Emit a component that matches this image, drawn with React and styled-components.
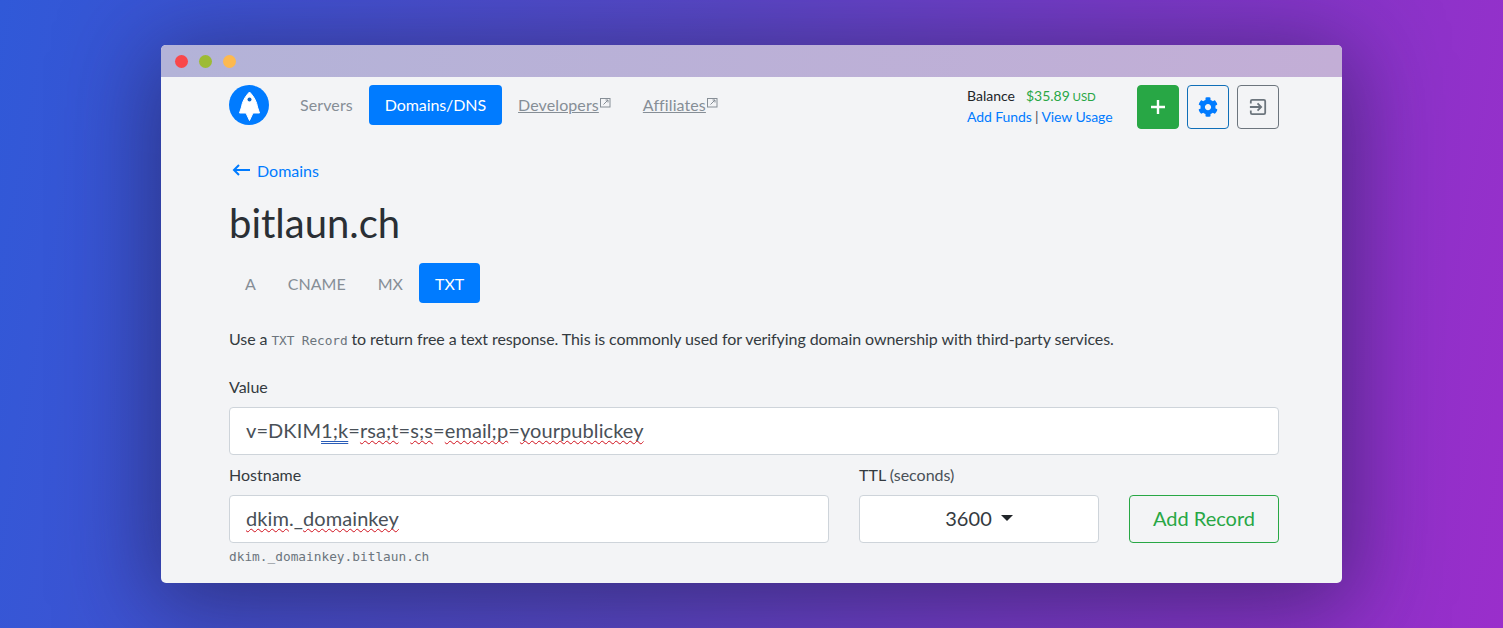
import styled, {createGlobalStyle} from 'styled-components'
import {FaCog} from 'react-icons/fa'

const GlobalStyle = createGlobalStyle`
  html, body {
    margin: 0;
    height: 100%;
    overflow: hidden;
  }
  body {
    font-family: Lato, "Open Sans", sans-serif;
    color: #212529;
  }
  * {
    box-sizing: border-box;
  }
`

const Page = styled.div`
  width: 1503px;
  height: 628px;
  display: flex;
  align-items: center;
  justify-content: center;
  background: linear-gradient(100deg, #3059d8 0%, #5a48c8 45%, #7a3ac8 70%, #9a2ecb 100%);
`

const Window = styled.div`
  width: 1181px;
  height: 538px;
  border-radius: 5px;
  overflow: hidden;
  background: #f3f4f6;
  box-shadow: 0 14px 90px 10px rgba(30, 25, 70, 0.55);
`

const TitleBar = styled.div`
  height: 32px;
  padding-left: 14px;
  display: flex;
  align-items: center;
  gap: 11px;
  background: linear-gradient(90deg, #b3b3d8, #c3aed6);
`

const Dot = styled.span`
  width: 13px;
  height: 13px;
  border-radius: 50%;
  background: ${props => props.color};
`

const Content = styled.div`
  padding: 8px 63px 0 68px;
`

const Nav = styled.nav`
  display: flex;
  align-items: flex-start;
  justify-content: space-between;
`

const NavLeft = styled.div`
  display: flex;
  align-items: center;
`

const Logo = styled.svg`
  width: 40px;
  height: 40px;
  margin-right: 15px;
`

const NavLink = styled.a`
  height: 40px;
  padding: 0 16px 2px;
  display: flex;
  align-items: center;
  border-radius: 4px;
  font-size: 16px;
  letter-spacing: ${props => (props.$active ? '-0.09px' : '0.1px')};
  color: ${props => (props.$active ? '#fff' : '#868e96')};
  background: ${props => (props.$active ? '#007bff' : 'transparent')};
`

const NavText = styled.span`
  text-decoration: underline;
`

const ExternalIcon = styled.svg`
  width: 11px;
  height: 11px;
  margin: 0 0 3px 1px;
`

const NavRight = styled.div`
  display: flex;
  align-items: flex-start;
`

const Balance = styled.div`
  width: 170px;
  font-size: 14px;
  line-height: 21px;
`

const BalanceRow = styled.div`
  display: flex;
  gap: 11px;
`

const Amount = styled.span`
  color: #28a745;
  small {
    margin-left: -1px;
    font-size: 11.5px;
  }
`

const FundLinks = styled.div`
  margin-top: -1px;
  color: #495057;
  font-size: 14px;
  letter-spacing: -0.1px;
  a {
    color: #007bff;
  }
`

const IconButtons = styled.div`
  display: flex;
  gap: 8px;
`

const IconButton = styled.button`
  width: 42px;
  height: 44px;
  padding: 0;
  display: flex;
  align-items: center;
  justify-content: center;
  border-radius: 4px;
  border: 1px solid ${props => props.$border};
  background: ${props => props.$bg || 'transparent'};
  color: ${props => props.$color};
`

const BackLink = styled.a`
  margin-top: 31px;
  display: flex;
  align-items: center;
  gap: 7px;
  padding-left: 3px;
  height: 20px;
  font-size: 16px;
  color: #007bff;
`

const Title = styled.h1`
  margin: 19px 0 0;
  font-size: 40px;
  font-weight: 400;
  line-height: 48px;
  color: #2a2f34;
`

const Tabs = styled.div`
  margin-top: 16px;
  display: flex;
`

const Tab = styled.a`
  height: 40px;
  padding: 0 16px;
  display: flex;
  align-items: center;
  border-radius: 4px;
  font-size: 16px;
  color: ${props => (props.$active ? '#fff' : '#868e96')};
  background: ${props => (props.$active ? '#007bff' : 'transparent')};
`

const Description = styled.p`
  margin: 24px 0 0;
  font-size: 16px;
  line-height: 24px;
  letter-spacing: -0.08px;
  color: #343a40;
  code {
    font-family: "DejaVu Sans Mono", monospace;
    font-size: 12.8px;
    letter-spacing: -0.1px;
    color: #6c757d;
  }
`

const Label = styled.label`
  display: block;
  margin-bottom: 8px;
  font-size: 16px;
  line-height: 24px;
  color: #343a40;
  span {
    color: #495057;
  }
`

const ValueGroup = styled.div`
  margin-top: 22px;
`

const FieldBox = styled.div`
  height: 48px;
  padding: 0 16px 2px;
  display: flex;
  align-items: center;
  border: 1px solid #ced4da;
  border-radius: 4px;
  background: #fff;
  font-size: 20px;
  letter-spacing: 0.08px;
  color: #495057;
  white-space: pre;
`

const Typo = styled.span`
  text-decoration: underline wavy #d0101c 1.3px;
  text-decoration-skip-ink: none;
  text-underline-offset: 2px;
`

const Grammar = styled.span`
  text-decoration: underline double #2a5db8 1px;
  text-decoration-skip-ink: none;
  text-underline-offset: 3px;
`

const FormRow = styled.div`
  margin-top: 8px;
  display: grid;
  grid-template-columns: 600px 240px 150px;
  column-gap: 30px;
  align-items: end;
`

const HostField = styled.div`
  position: relative;
`

const Hint = styled.div`
  position: absolute;
  top: 100%;
  left: 0;
  margin-top: 6px;
  font-family: "DejaVu Sans Mono", monospace;
  font-size: 12.8px;
  line-height: 16px;
  color: #6c757d;
`

const SelectBox = styled(FieldBox)`
  justify-content: center;
  gap: 9px;
  color: #343a40;
`

const Caret = styled.span`
  width: 0;
  height: 0;
  border-left: 6.5px solid transparent;
  border-right: 6.5px solid transparent;
  border-top: 6px solid #212529;
`

const AddButton = styled.button`
  height: 48px;
  padding: 0 0 3px;
  border: 1px solid #28a745;
  border-radius: 4px;
  background: transparent;
  color: #28a745;
  font-family: inherit;
  font-size: 20px;
`

const External = () => (
  <ExternalIcon viewBox="0 0 11 11" fill="none" stroke="#868e96" strokeWidth="1">
    <rect x="0.5" y="1.500" width="9.500" height="8.500" />
    <path d="M3.500 7.500L8 3M5.500 3H8V5.500" />
  </ExternalIcon>
)

const App = () => (
  <Page>
    <GlobalStyle />
    <Window>
      <TitleBar>
        <Dot color="#f9474b" />
        <Dot color="#9dbb35" />
        <Dot color="#fdb94f" />
      </TitleBar>
      <Content>
        <Nav>
          <NavLeft>
            <Logo viewBox="0 0 40 40">
              <circle cx="20" cy="20" r="20" fill="#007bff" />
              <path
                d="M20.500 7C15.500 12 13 18 12.500 22L10.500 28H17L20.500 35.500L24 28H30.500L28.500 22C28 18 25.500 12 20.500 7z"
                fill="#fff"
                stroke="#fff"
                strokeLinejoin="round"
              />
              <circle cx="20.500" cy="14.500" r="2" fill="#0a66c8" />
            </Logo>
            <NavLink>Servers</NavLink>
            <NavLink $active>Domains/DNS</NavLink>
            <NavLink>
              <NavText>Developers</NavText>
              <External />
            </NavLink>
            <NavLink>
              <NavText>Affiliates</NavText>
              <External />
            </NavLink>
          </NavLeft>
          <NavRight>
            <Balance>
              <BalanceRow>
                <span>Balance</span>
                <Amount>
                  $35.89 <small>USD</small>
                </Amount>
              </BalanceRow>
              <FundLinks>
                <a>Add Funds</a> | <a>View Usage</a>
              </FundLinks>
            </Balance>
            <IconButtons>
              <IconButton $border="#28a745" $bg="#28a745" $color="#fff">
                <svg width="16" height="16" viewBox="0 0 16 16" fill="none" stroke="#fff" strokeWidth="2.400">
                  <path d="M8 1v14M1 8h14" />
                </svg>
              </IconButton>
              <IconButton $border="#0f6fb8" $color="#007bff">
                <FaCog size={20} />
              </IconButton>
              <IconButton $border="#6c757d" $color="#6c757d">
                <svg width="18" height="18" viewBox="0 0 20 20" fill="none" stroke="#6c757d" strokeWidth="2">
                  <path d="M2 6V3.500A1.500 1.500 0 0 1 3.500 2h13A1.500 1.500 0 0 1 18 3.500v13a1.500 1.500 0 0 1-1.500 1.500h-13A1.500 1.500 0 0 1 2 16.500V14" />
                  <path d="M1 10h12M9.500 6l4 4-4 4" />
                </svg>
              </IconButton>
            </IconButtons>
          </NavRight>
        </Nav>
        <BackLink>
          <svg width="18" height="12" viewBox="0 0 18 12" fill="none" stroke="#007bff" strokeWidth="2">
            <path d="M18 6H2M7 1L2 6l5 5" />
          </svg>
          Domains
        </BackLink>
        <Title>bitlaun.ch</Title>
        <Tabs>
          <Tab>A</Tab>
          <Tab>CNAME</Tab>
          <Tab>MX</Tab>
          <Tab $active>TXT</Tab>
        </Tabs>
        <Description>
          Use a <code>TXT Record</code> to return free a text response. This is commonly used for verifying domain
          ownership with third-party services.
        </Description>
        <ValueGroup>
          <Label>Value</Label>
          <FieldBox>
            v=DKIM<Grammar>1;k</Grammar>=<Typo>rsa;t</Typo>=<Typo>s;s</Typo>=<Typo>email;p</Typo>=<Typo>yourpublickey</Typo>
          </FieldBox>
        </ValueGroup>
        <FormRow>
          <HostField>
            <Label>Hostname</Label>
            <FieldBox>
              <Typo>dkim</Typo>._<Typo>domainkey</Typo>
            </FieldBox>
            <Hint>dkim._domainkey.bitlaun.ch</Hint>
          </HostField>
          <div>
            <Label>
              TTL <span>(seconds)</span>
            </Label>
            <SelectBox>
              3600
              <Caret />
            </SelectBox>
          </div>
          <AddButton>Add Record</AddButton>
        </FormRow>
      </Content>
    </Window>
  </Page>
)

export default App
